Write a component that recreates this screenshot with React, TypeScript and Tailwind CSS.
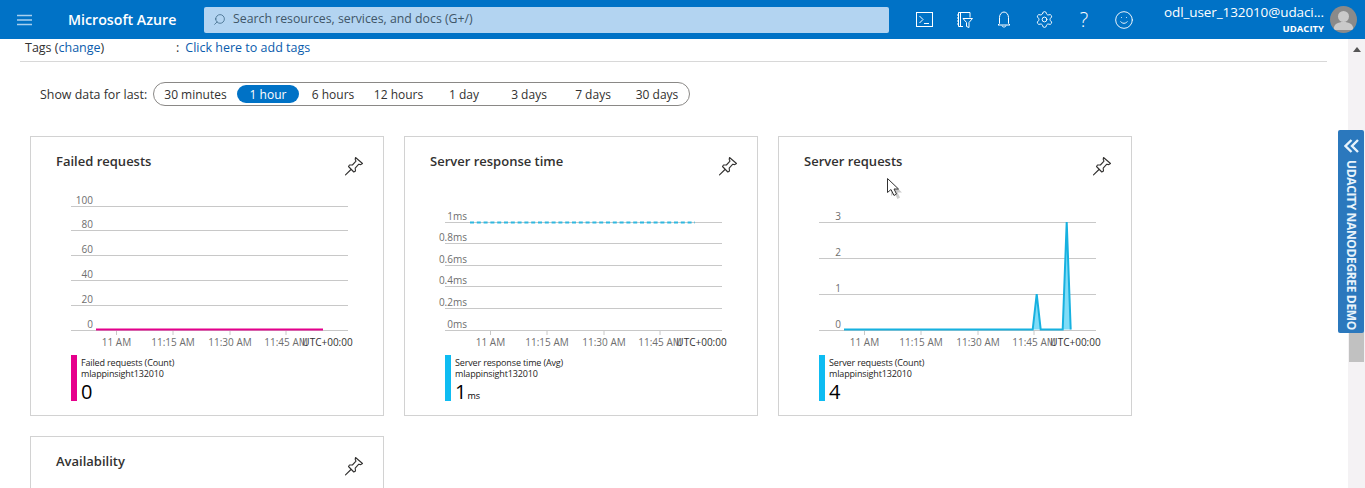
import React from "react";
import { Settings, Smile, Search } from "lucide-react";

const Pin = () => (
  <svg width="20" height="20" viewBox="0 0 20 20" fill="none" stroke="#323130" strokeWidth="1.1" strokeLinejoin="round" strokeLinecap="round">
    <path d="M11.5 1.5 L18.5 7.5 L16.8 8.6 L14.8 8.2 L11.2 12.2 L11.5 15 L9.8 16 L4.5 10.5 L5.5 9 L8.4 9 L12 5.2 L11.2 3.4 Z" />
    <path d="M7 13.5 L1.5 18.8" />
  </svg>
);

const xTicks = [
  { x: 86.5, t: "11 AM" },
  { x: 143, t: "11:15 AM" },
  { x: 200, t: "11:30 AM" },
  { x: 256, t: "11:45 AM" },
];

function Chart({ grid, children }: { grid: { y: number; t: string }[]; children?: React.ReactNode }) {
  return (
    <svg width="354" height="166" viewBox="0 0 354 166" className="block -ml-[1px]">
      {grid.map((g) => (
        <g key={g.t}>
          <line x1="41" x2="318" y1={g.y + 0.5} y2={g.y + 0.5} stroke="#c8c8c8" />
          <text x="63" y={g.y - 2} textAnchor="end" fontSize="10" fill="#6e6e6e">{g.t}</text>
        </g>
      ))}
      {xTicks.map((k) => (
        <g key={k.t}>
          <line x1={k.x} x2={k.x} y1="140" y2="145" stroke="#c8c8c8" />
          <text x={k.x} y="156" textAnchor="middle" fontSize="10" fill="#6e6e6e">{k.t}</text>
        </g>
      ))}
      <text x="297.5" y="156" textAnchor="middle" fontSize="10" fill="#323130">UTC+00:00</text>
      {children}
    </svg>
  );
}

function Card({ title, children, color, legend, value, unit }: {
  title: string; children?: React.ReactNode; color?: string; legend?: string; value?: string; unit?: string;
}) {
  return (
    <div className="w-[354px] h-[280px] border border-[#d2d2d2] bg-white shrink-0">
      <div className="flex justify-between pl-[25px] pr-[19px] pt-[15px] h-[53px]">
        <div className="text-[13px] leading-[18px] font-semibold text-[#323130]">{title}</div>
        <div className="pt-[4px]"><Pin /></div>
      </div>
      {children}
      {legend && (
        <div className="flex ml-[40px] mt-[-1px] h-[46px]">
          <div className="w-[6px] h-[46px] mr-[4px]" style={{ background: color }} />
          <div className="text-[9px] leading-[11px] tracking-[-0.15px] text-[#252423] pt-[2px]">
            <div>{legend}</div>
            <div>mlappinsight132010</div>
            <div className="text-[20px] leading-[24px] tracking-normal text-black font-medium pt-[1px]">
              {value}
              {unit && <span className="text-[9px] font-normal ml-[1px]">{unit}</span>}
            </div>
          </div>
        </div>
      )}
    </div>
  );
}

const ranges = [
  { t: "30 minutes", c: "w-[65px]" },
  { t: "1 hour", c: "w-[62px] ml-[9px] mr-[1px] h-[18px] rounded-full bg-[#0072c6] text-white" },
  { t: "6 hours", c: "w-[66px]" },
  { t: "12 hours", c: "w-[65px]" },
  { t: "1 day", c: "w-[66px]" },
  { t: "3 days", c: "w-[64px]" },
  { t: "7 days", c: "w-[64px]" },
  { t: "30 days", c: "w-[64px]" },
];

export default function App() {
  return (
    <div className="relative w-[1365px] h-[488px] overflow-hidden bg-white font-['Open_Sans','Noto_Sans',sans-serif] text-[#323130]">
      {/* Top bar */}
      <header className="h-[39px] bg-[#0072c6] flex items-center text-white">
        <div className="w-[68px] pl-[17px] shrink-0">
          <svg width="15" height="12" viewBox="0 0 15 12" stroke="#a9d0ee" strokeWidth="1.4">
            <path d="M0 1.5H15M0 6H15M0 10.5H15" />
          </svg>
        </div>
        <div className="w-[136px] shrink-0 text-[14.2px] font-semibold">Microsoft Azure</div>
        <div className="w-[685px] h-[26px] bg-[#b3d4f1] rounded-[2px] flex items-center pl-[9px] text-[12.3px] text-[#3f5668] shrink-0">
          <Search size={13} strokeWidth={1.2} className="mr-[7px] -scale-x-100 text-[#24516f]" />
          <span>Search resources, services, and docs (G+/)</span>
        </div>
        <div className="flex items-center ml-[15px] shrink-0">
          <div className="w-[40px] flex justify-center">
            <svg width="17" height="15" viewBox="0 0 17 15" fill="none" stroke="#fff" strokeWidth="1">
              <rect x="0.5" y="0.5" width="16" height="14" />
              <path d="M3.5 4 L7 7.5 L3.5 11 M8 11.5H13" />
            </svg>
          </div>
          <div className="w-[40px] flex justify-center">
            <svg width="18" height="18" viewBox="0 0 18 18" fill="none" stroke="#fff" strokeWidth="1">
              <path d="M8 15.5H3.5V1.5H15V6.5" />
              <path d="M5.5 1.5V15.5M2 4H3.5M2 7H3.5M2 10H3.5M2 13H3.5" />
              <path d="M8 7.5H17.5L14 11.5V16.5L11.5 15.5V11.5Z" />
            </svg>
          </div>
          <div className="w-[40px] flex justify-center">
            <svg width="14" height="17" viewBox="0 0 14 17" fill="none" stroke="#fff" strokeWidth="1">
              <path d="M2.5 12.5V6.5C2.5 3.5 4.5 1 7 1S11.5 3.5 11.5 6.5V12.5L13 14H1Z" />
              <path d="M5 14.5C5 16.5 9 16.5 9 14.5" />
            </svg>
          </div>
          <div className="w-[40px] flex justify-center"><Settings size={19} strokeWidth={1.2} /></div>
          <div className="w-[40px] flex justify-center text-[20px] leading-none font-light">?</div>
          <div className="w-[40px] flex justify-center"><Smile size={20} strokeWidth={1.1} /></div>
        </div>
        <div className="flex-1" />
        <div className="text-right mr-[6px] shrink-0 -mt-[2px]">
          <div className="text-[13.5px] leading-[17px] tracking-[-0.1px] mb-[2px]">odl_user_132010@udaci...</div>
          <div className="text-[9.5px] leading-[11px] font-bold">UDACITY</div>
        </div>
        <div className="w-[27px] h-[27px] rounded-full bg-[#8a8a8a] mr-[8px] overflow-hidden shrink-0">
          <svg width="27" height="27" viewBox="0 0 27 27" fill="#c9c9c9">
            <circle cx="13.5" cy="10.5" r="5.5" />
            <path d="M3.5 24C3.5 18 8 16 13.5 16S23.5 18 23.5 24Z" />
          </svg>
        </div>
      </header>

      <div className="flex h-[449px]">
        <main className="flex-1 overflow-hidden">
          <div className="ml-[20px] mr-[21px] h-[23px] border-b border-[#d8d8d8] flex items-start text-[12.5px] leading-[16px] pl-[5px] pt-[1px]">
            <div className="w-[151px] shrink-0">Tags (<span className="text-[#0b5cad]">change</span>)</div>
            <div><span className="mr-[6px]">:</span><span className="text-[#0b5cad]">Click here to add tags</span></div>
          </div>
          <div className="flex items-center pl-[40px] mt-[20px] text-[12px]">
            <span className="w-[113px] shrink-0 text-[12.4px] pt-[2px]">Show data for last:</span>
            <div className="w-[537px] h-[24px] rounded-full border border-[#8a8886] flex items-center pl-[9px]">
              {ranges.map((r) => (
                <div key={r.t} className={`${r.c} pt-[2px] shrink-0 flex items-center justify-center`}>{r.t}</div>
              ))}
            </div>
          </div>
          <div className="flex flex-wrap gap-[20px] pl-[30px] pt-[30px]">
            <Card title="Failed requests" color="#e6008c" legend="Failed requests (Count)" value="0">
              <Chart grid={[
                { y: 16, t: "100" }, { y: 40, t: "80" }, { y: 65, t: "60" }, { y: 90, t: "40" }, { y: 115, t: "20" }, { y: 140, t: "0" },
              ]}>
                <line x1="66" x2="293" y1="139.5" y2="139.5" stroke="#e3008c" strokeWidth="2" />
              </Chart>
            </Card>
            <Card title="Server response time" color="#0ebcf2" legend="Server response time (Avg)" value="1" unit="ms">
              <Chart grid={[
                { y: 32, t: "1ms" }, { y: 53, t: "0.8ms" }, { y: 75, t: "0.6ms" }, { y: 96, t: "0.4ms" }, { y: 118, t: "0.2ms" }, { y: 140, t: "0ms" },
              ]}>
                <line x1="66" x2="291" y1="32.5" y2="32.5" stroke="#2fb8e0" strokeWidth="2" strokeDasharray="4 2.8" />
              </Chart>
            </Card>
            <Card title="Server requests" color="#0ebcf2" legend="Server requests (Count)" value="4">
              <Chart grid={[
                { y: 32, t: "3" }, { y: 68, t: "2" }, { y: 104, t: "1" }, { y: 140, t: "0" },
              ]}>
                <path d="M254.7 139.5 L258.7 104 L262.7 139.5 Z M284.7 139.5 L288.7 32 L292.7 139.5 Z" fill="#7fdcf7" />
                <path d="M66 139.5 H254.7 L258.7 104 L262.7 139.5 H284.7 L288.7 32 L292.7 139.5" fill="none" stroke="#16b1e0" strokeWidth="2" />
              </Chart>
            </Card>
            <Card title="Availability" />
          </div>
        </main>
        <aside className="w-[17px] bg-[#f4f2f4] shrink-0 flex flex-col items-center pt-[8px]">
          <svg width="8" height="5" viewBox="0 0 8 5" fill="#555"><path d="M4 0 L8 5 H0 Z" /></svg>
          <div className="w-[15px] h-[160px] mt-[150px] bg-[#c1c1c1]" />
        </aside>
      </div>

      {/* Floating demo tab */}
      <div className="absolute left-[1338px] top-[130px] w-[26px] h-[203px] bg-[#2b78bd] rounded-[2px] flex flex-col items-center text-[#e8f3fb]">
        <svg width="16" height="14" viewBox="0 0 16 14" fill="none" stroke="#e8f3fb" strokeWidth="2.4" className="mt-[9px] ml-[2px] shrink-0">
          <path d="M7.5 1 L1.5 7 L7.5 13 M14 1 L8 7 L14 13" />
        </svg>
        <div className="[writing-mode:vertical-rl] text-[12px] font-bold whitespace-nowrap mt-[7px] leading-[26px] tracking-[-0.35px]">UDACITY NANODEGREE DEMO</div>
      </div>

      {/* Mouse pointer */}
      <svg width="18" height="23" viewBox="0 0 18 23" className="absolute left-[886px] top-[177px]">
        <path d="M3 3 L3 17 L6.5 14 L9.5 20 L12 18.5 L9.5 13.5 L14 13.5 Z" fill="#999" opacity="0.5" transform="translate(2 2)" />
        <path d="M1.5 1.5 L1.5 15.5 L5 12.5 L8 18.5 L10.5 17 L8 12 L12.5 12 Z" fill="#fff" stroke="#333" strokeWidth="1" />
      </svg>
    </div>
  );
}
